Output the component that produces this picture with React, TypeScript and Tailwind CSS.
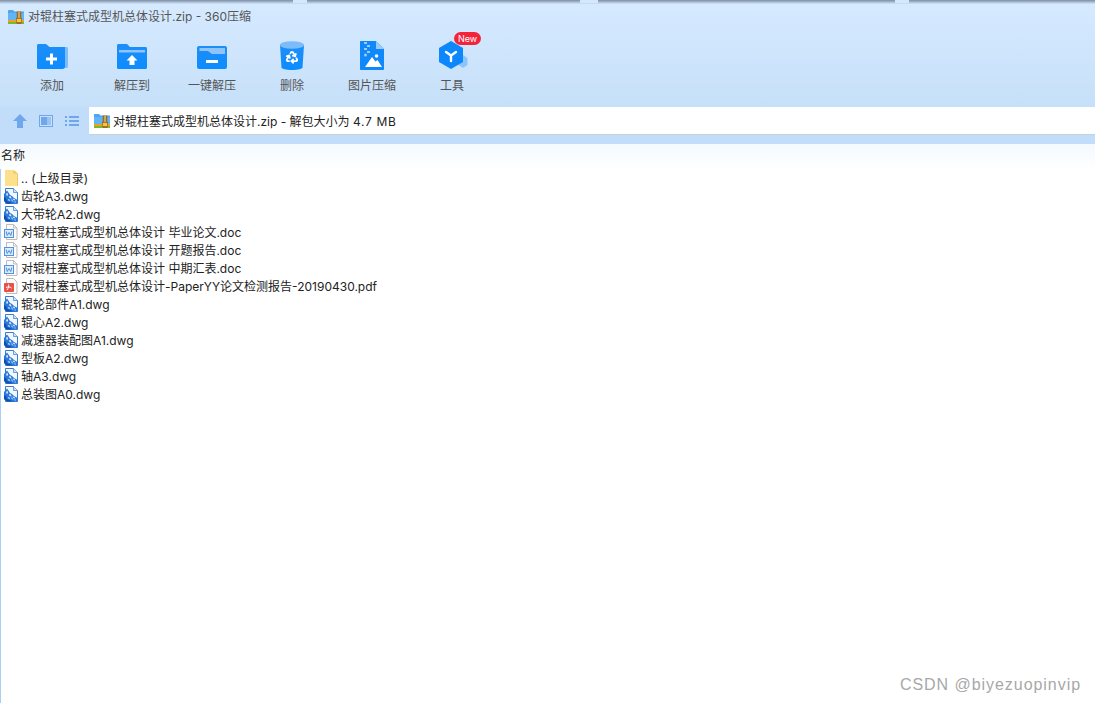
import React from 'react'

const font = { fontFamily: 'Inter, "Noto Sans CJK SC", sans-serif' }

function ZipIcon() {
  return (
    <svg width="16" height="14" viewBox="0 0 16 14" className="shrink-0">
      <path d="M0 1C0 .4.4 0 1 0h4l1.500 1.500H16V11H0z" fill="#4da6f0" />
      <rect x="0" y="3" width="16" height="7.500" fill="#62b5f4" />
      <rect x="0" y="10" width="16" height="2" fill="#f0a020" />
      <rect x="0" y="12" width="16" height="2" fill="#78b832" />
      <rect x="8.700" y="1.500" width="4.600" height="12.500" fill="#9c6a28" />
      <rect x="10.300" y="1.500" width="1.400" height="7" fill="#e4bc70" />
      <rect x="8.300" y="8.500" width="5.400" height="4" fill="#f4c83a" stroke="#8a5a20" strokeWidth=".6" />
    </svg>
  )
}

function IconFrame({ children }: { children: React.ReactNode }) {
  return (
    <svg width="32" height="30" viewBox="0 0 32 30">
      <defs>
        <linearGradient id="fb" x1="0" y1="0" x2="0" y2="1">
          <stop offset="0" stopColor="#1e8ef8" />
          <stop offset="1" stopColor="#0c8cff" />
        </linearGradient>
      </defs>
      {children}
    </svg>
  )
}

function AddIcon() {
  return (
    <IconFrame>
      <g transform="translate(0 3)">
        <path d="M27 3h3.500c.8 0 1.500.7 1.500 1.500V22.500c0 .8-.7 1.500-1.500 1.500H27z" fill="#7cbcfb" />
        <path d="M1 1.500C1 .7 1.700 0 2.500 0H10l3.500 3H29v19.500c0 1.200-.8 2.500-2.500 2.500h-24C1.700 25 1 24.300 1 23.500z" fill="url(#fb)" />
        <path d="M10 13.500h4v-4h3v4h4v3h-4v4h-3v-4h-4z" fill="#fff" />
      </g>
    </IconFrame>
  )
}

function ExtractIcon() {
  return (
    <IconFrame>
      <g transform="translate(0 3)">
        <path d="M1 1.500C1 .7 1.700 0 2.500 0H11l3 3h15.500c.8 0 1.500.7 1.500 1.500v19c0 .8-.7 1.500-1.500 1.500h-27C1.700 25 1 24.300 1 23.500z" fill="url(#fb)" />
        <path d="M3 6h26v2.500H3z" fill="#8cc4fb" />
        <path d="M16 11l5.500 5.500h-3V21h-5v-4.500h-3z" fill="#fff" />
      </g>
    </IconFrame>
  )
}

function OneKeyIcon() {
  return (
    <IconFrame>
      <g transform="translate(0 3)">
        <rect x="1" y="2" width="30" height="23" rx="2" fill="url(#fb)" />
        <path d="M3.500 4H29v6H16l-4-3H3.500z" fill="#8cc4fb" />
        <rect x="10" y="16" width="12" height="3" fill="#fff" />
      </g>
    </IconFrame>
  )
}

function TrashIcon() {
  return (
    <IconFrame>
      <g transform="translate(4 0)">
        <path d="M0 4h24l-1.500 22.500c0 1.300-4.500 2.500-10.500 2.500S1.500 27.800 1.500 26.500z" fill="url(#fb)" />
        <ellipse cx="12" cy="4" rx="12" ry="3.800" fill="#7cbcfb" />
        <svg x="5" y="9" width="14" height="14" viewBox="0 0 24 24" fill="none" stroke="#fff" strokeWidth="3" strokeLinecap="round" strokeLinejoin="round">
          <path d="M7 19H4.815a1.830 1.830 0 0 1-1.570-.881 1.785 1.785 0 0 1-.004-1.784L7.196 9.500" />
          <path d="M11 19h8.203a1.830 1.830 0 0 0 1.556-.89 1.784 1.784 0 0 0 0-1.775l-1.226-2.120" />
          <path d="m14 16-3 3 3 3" />
          <path d="M8.293 13.596 7.196 9.500 3.100 10.598" />
          <path d="m9.344 5.811 1.093-1.892A1.830 1.830 0 0 1 11.985 3a1.784 1.784 0 0 1 1.546.888l3.943 6.843" />
          <path d="m13.378 9.633 4.096 1.098 1.097-4.096" />
        </svg>
      </g>
    </IconFrame>
  )
}

function ImageZipIcon() {
  return (
    <IconFrame>
      <g transform="translate(4 0)">
        <path d="M1 0h15l8 8v20c0 .6-.4 1-1 1H1c-.6 0-1-.4-1-1V1c0-.6.4-1 1-1z" fill="#0f88fc" />
        <path d="M16 0l8 8h-8z" fill="#9ccbfb" />
        <path d="M4 1h3v2H4zM7 4h3v2H7zM4 7h3v2H4zM7 10h3v2H7z" fill="#9ccbfb" />
        <circle cx="5.500" cy="14" r="1.500" fill="#9ccbfb" />
        <circle cx="16.500" cy="15" r="1.800" fill="#fff" />
        <path d="M5 26l7-10 3.500 4.500 2-1.500 4.500 7z" fill="#fff" />
      </g>
    </IconFrame>
  )
}

function ToolIcon() {
  return (
    <IconFrame>
      <path d="M27 14l4.500 3v7L27 27l-4.500-3v-7z" fill="#8cc4fb" />
      <path d="M15 0l12 7v14l-12 7-12-7V7z" fill="#0c88fc" />
      <path d="M10 11l5 3.500 5-3.500M15 14.500V20" fill="none" stroke="#fff" strokeWidth="2.400" strokeLinecap="round" />
    </IconFrame>
  )
}

function DwgIcon() {
  return (
    <svg width="14" height="16" viewBox="0 0 14 16" className="shrink-0">
      <path d="M1.500.500h8l4 4v11h-12z" fill="#f2f7fd" stroke="#3a7ccc" />
      <path d="M9.500.500v4h4" fill="#cfe2f7" stroke="#3a7ccc" strokeWidth=".7" />
      <path d="M0 6l3-3.500 1.500 2L6 7l2 1 2 2 3.500 2v3.500H3L0 13z" fill="#2a78dc" />
      <path d="M0 9l2 1 1 3 3 1 3 1.500H3L0 13z" fill="#0f4fb0" />
      <path d="M3 4.500l1 1.500-.5 2L2 7zM5 8l2 .5.500 2-2-.5zM8.500 10.500l2 .5 1 1.500-2-.5zM4 11l1.500.5.500 1.500L4.500 12.500z" fill="#dceefc" />
      <path d="M7 11l2 1 .5 2-2-1zM10.500 13l1.500.5v1.300l-1.500-.3z" fill="#86bcf2" />
    </svg>
  )
}

function DocIcon() {
  return (
    <svg width="14" height="16" viewBox="0 0 14 16" className="shrink-0">
      <path d="M2.500.500h7l3.500 3.500v11.500H2.500z" fill="#fcfcfc" stroke="#bdbdbd" />
      <path d="M9.500.500V4H13" fill="none" stroke="#bdbdbd" />
      <rect x=".500" y="5.500" width="9" height="8" fill="#dceafa" stroke="#4f94e2" />
      <path d="M2.200 7.500l1 4 1.800-3 1.800 3 1-4" fill="none" stroke="#3d86d8" strokeWidth=".9" />
    </svg>
  )
}

function PdfIcon() {
  return (
    <svg width="14" height="16" viewBox="0 0 14 16" className="shrink-0">
      <path d="M2.500.500h7l3.500 3.500v11.500H2.500z" fill="#fcfcfc" stroke="#bdbdbd" />
      <rect x="0" y="5" width="10" height="9" rx="1" fill="#e8504a" />
      <path d="M3 12c1.500-2 2-4 1.500-5.500M2 9.500c1.800-.8 4-.8 5.500.5" fill="none" stroke="#fff" strokeWidth="1" />
    </svg>
  )
}

function UpFolderIcon() {
  return (
    <svg width="14" height="16" viewBox="0 0 14 16" className="shrink-0">
      <path d="M1 1C1 .4 1.400 0 2 0h7.500L14 3.500V16H1z" fill="#fde08c" />
      <path d="M9.500 0v3.500H14z" fill="#f0c565" />
      <path d="M13 4h1v12h-1z" fill="#f0c565" />
    </svg>
  )
}

const tools = [
  { label: '添加', icon: <AddIcon /> },
  { label: '解压到', icon: <ExtractIcon /> },
  { label: '一键解压', icon: <OneKeyIcon /> },
  { label: '删除', icon: <TrashIcon /> },
  { label: '图片压缩', icon: <ImageZipIcon /> },
  { label: '工具', icon: <ToolIcon />, badge: true },
]

const files = [
  { name: '.. (上级目录)', icon: <UpFolderIcon /> },
  { name: '齿轮A3.dwg', icon: <DwgIcon /> },
  { name: '大带轮A2.dwg', icon: <DwgIcon /> },
  { name: '对辊柱塞式成型机总体设计 毕业论文.doc', icon: <DocIcon /> },
  { name: '对辊柱塞式成型机总体设计 开题报告.doc', icon: <DocIcon /> },
  { name: '对辊柱塞式成型机总体设计 中期汇表.doc', icon: <DocIcon /> },
  { name: '对辊柱塞式成型机总体设计-PaperYY论文检测报告-20190430.pdf', icon: <PdfIcon /> },
  { name: '辊轮部件A1.dwg', icon: <DwgIcon /> },
  { name: '辊心A2.dwg', icon: <DwgIcon /> },
  { name: '减速器装配图A1.dwg', icon: <DwgIcon /> },
  { name: '型板A2.dwg', icon: <DwgIcon /> },
  { name: '轴A3.dwg', icon: <DwgIcon /> },
  { name: '总装图A0.dwg', icon: <DwgIcon /> },
]

export default function App() {
  return (
    <div className="relative h-[703px] w-[1095px] overflow-hidden bg-white text-xs" style={font}>
      <div className="h-[107px] bg-gradient-to-b from-[#d6eaff] to-[#c6e0f9]">
        <div className="h-[4px] bg-gradient-to-b from-[#7d8ea4] to-[#d2e6fc]" />
        <div className="flex h-[25px] items-center gap-1 pl-2 text-[#555]">
          <ZipIcon />
          <span className="pt-px">对辊柱塞式成型机总体设计.zip - 360压缩</span>
        </div>
        <div className="flex pl-3 pt-3">
          {tools.map((t) => (
            <div key={t.label} className="relative flex w-20 flex-col items-center">
              <div className="h-[30px]">{t.icon}</div>
              <div className="mt-[7px] text-[#555]">{t.label}</div>
              {t.badge && (
                <span className="absolute left-[42px] top-[-9px] rounded-full bg-[#f5233a] px-1 text-[9px] leading-[13px] text-white">
                  New
                </span>
              )}
            </div>
          ))}
        </div>
      </div>
      <div className="flex h-[37px] bg-[#c2ddf9] pb-[9px]">
        <div className="flex w-[89px] items-center gap-[12px] pl-[13px]">
          <svg width="14" height="14" viewBox="0 0 14 14" className="shrink-0">
            <path d="M7 0l7 7H10v7H4V7H0z" fill="#6ea7ec" />
          </svg>
          <svg width="14" height="12" viewBox="0 0 14 12" className="shrink-0">
            <rect x=".500" y=".500" width="13" height="11" fill="#c9e0f8" stroke="#6ea7ec" />
            <rect x="2" y="2" width="6" height="8" fill="#6ea7ec" />
            <rect x="8" y="2" width="4" height="8" fill="#9cc4f2" />
          </svg>
          <svg width="14" height="10" viewBox="0 0 14 10" className="shrink-0">
            <path d="M0 0h2v2H0zM0 4h2v2H0zM0 8h2v2H0zM4 0h10v2H4zM4 4h10v2H4zM4 8h10v2H4z" fill="#6ea7ec" />
          </svg>
        </div>
        <div className="flex flex-1 items-center gap-[3px] border-b border-[#c4d2e0] bg-white pl-[5px] text-[#222]">
          <ZipIcon />
          <span className="pt-[3px]">
            对辊柱塞式成型机总体设计.zip - 解包大小为 <span className="tracking-[0.7px]">4.7 MB</span>
          </span>
        </div>
      </div>
      <div className="h-[25px] bg-gradient-to-b from-[#f3f9ff] to-white pl-[1px] pt-[3px] leading-[17px] text-[#222]">
        名称
      </div>
      <div className="h-[534px] border-l border-[#a9cdf5] pl-[3px]">
        {files.map((f) => (
          <div key={f.name} className="flex h-[18px] items-center gap-[3px] text-[#222]">
            {f.icon}
            <span className="whitespace-pre pt-px">{f.name}</span>
          </div>
        ))}
      </div>
      <span className="absolute left-[293px] top-0 h-[3px] w-[14px] bg-[#d4e7fb]" />
      <span className="absolute left-[580px] top-0 h-[3px] w-[18px] bg-[#d4e7fb]" />
      <span className="absolute left-[895px] top-0 h-[3px] w-[14px] bg-[#d4e7fb]" />
      <div
        className="absolute right-[14px] top-[673px] text-[16px] leading-[24px] tracking-[0.95px] text-[#a8a8a8]"
        style={{ fontFamily: '"Liberation Sans", sans-serif' }}
      >
        CSDN @biyezuopinvip
      </div>
    </div>
  )
}
